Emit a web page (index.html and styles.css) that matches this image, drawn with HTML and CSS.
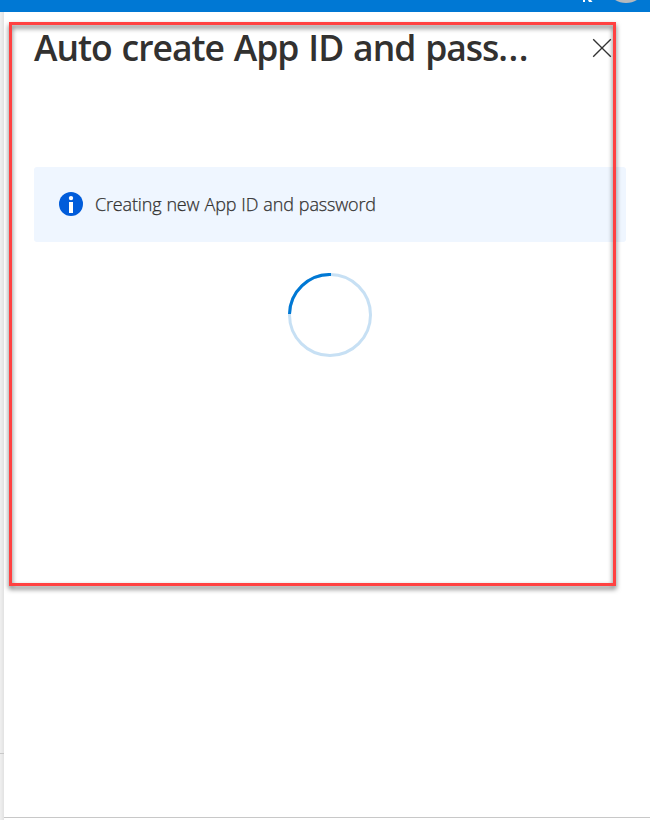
FILE: index.html
```html
<!DOCTYPE html>
<html lang="en">
<head>
<meta charset="utf-8">
<title>Auto create App ID and password</title>
<link rel="stylesheet" href="styles.css">
</head>
<body>
<header class="topbar">
  <svg class="topbar-icons" width="90" height="12" viewBox="0 0 90 12" aria-hidden="true">
    <path d="M23 0h2v2h-2zM28 0h3l1.5 2H29z" fill="#fff"/>
    <ellipse cx="66" cy="-10" rx="17" ry="13" fill="#b5b9bd"/>
  </svg>
</header>
<div class="workspace">
  <div class="edge"><div class="edge-top"></div><div class="edge-bottom"></div></div>
  <main class="panel">
    <div class="heading">
      <h1 class="title">Auto create App ID and pass<span class="dots">...</span></h1>
      <svg class="close" width="20" height="20" viewBox="0 0 20 20" role="button" aria-label="Close"><path d="M1.2 1.2 18.8 18.8M18.8 1.2 1.2 18.8" stroke="#333" stroke-width="1.35"/></svg>
    </div>
    <div class="notice">
      <svg class="info" width="24" height="24" viewBox="0 0 24 24" aria-hidden="true"><circle cx="12" cy="12" r="12" fill="#015cda"/><circle cx="12" cy="6.1" r="2.2" fill="#fff"/><path d="M10 10h4v11h-4z" fill="#fff"/></svg>
      <span class="message">Creating new App ID and password</span>
    </div>
    <svg class="spinner" width="84" height="84" viewBox="0 0 84 84" aria-hidden="true"><circle cx="42" cy="42" r="40.5" fill="none" stroke="#c7e0f4" stroke-width="3"/><path d="M1.5 41A40.5 40.5 0 0 1 43 1.5" fill="none" stroke="#0078d4" stroke-width="3"/></svg>
    <footer class="panel-footer"></footer>
  </main>
</div>
<div class="highlight"></div>
</body>
</html>
```
FILE: styles.css
```css
* { box-sizing: border-box; }
body {
  margin: 0;
  height: 820px;
  display: flex;
  flex-direction: column;
  overflow: hidden;
  position: relative;
  background: #fff;
  color: #323130;
  font-family: "Open Sans", "Noto Sans", sans-serif;
}
.topbar {
  height: 12px;
  flex: none;
  display: flex;
  justify-content: flex-end;
  background: #0078d4;
}
.topbar-icons { display: block; }
.workspace { flex: 1; display: flex; }
.edge {
  width: 4px;
  display: flex;
  flex-direction: column;
  background: linear-gradient(to right, #f0f0f0, #e2e2e2);
}
.edge-top { height: 742px; border-bottom: 1px solid #c8c8c8; }
.edge-bottom { flex: 1; }
.panel {
  flex: 1;
  display: flex;
  flex-direction: column;
  padding-left: 30px;
}
.heading {
  height: 72px;
  padding-right: 38px;
  display: flex;
  justify-content: space-between;
  align-items: center;
}
.title {
  margin: 0 0 2px;
  font-size: 35.5px;
  line-height: 48px;
  font-weight: 600;
  letter-spacing: -1.02px;
  word-spacing: 1.7px;
  white-space: nowrap;
}
.dots { letter-spacing: .5px; }
.close { display: block; }
.notice {
  width: 592px;
  height: 75px;
  margin-top: 83px;
  padding: 0 0 2px 25px;
  display: flex;
  align-items: center;
  gap: 12px;
  border-radius: 3px;
  background: #eff6ff;
}
.info { display: block; }
.message {
  padding-top: 1px;
  font-size: 18px;
  font-weight: 300;
  letter-spacing: -.17px;
  word-spacing: .6px;
  color: #323130;
  -webkit-text-stroke: .25px #323130;
  white-space: nowrap;
}
.spinner { display: block; margin: 31px 0 0 254px; }
.panel-footer {
  height: 3px;
  margin: auto 0 0 -30px;
  border-top: 1px solid #c8c8c8;
}
.highlight {
  position: absolute;
  left: 9px;
  top: 22px;
  width: 607px;
  height: 564px;
  border: 3px solid #ff4141;
  filter: drop-shadow(0 3px 2.5px rgba(0, 0, 0, .6));
  pointer-events: none;
}
```
